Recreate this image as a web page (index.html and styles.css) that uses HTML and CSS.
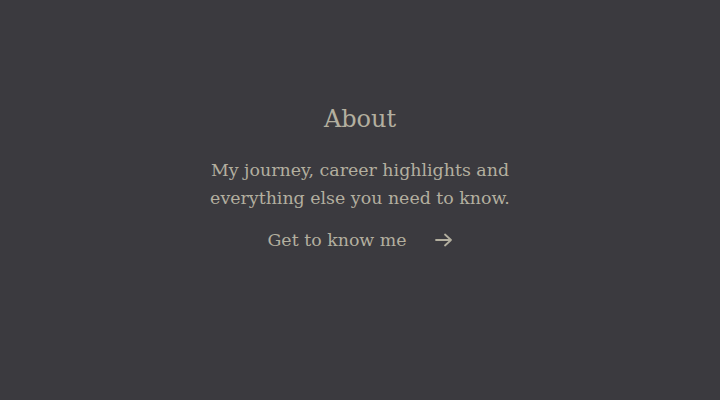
FILE: index.html
```html
<!DOCTYPE html>
<html lang="en">
<head>
<meta charset="utf-8">
<title>About</title>
<link rel="stylesheet" href="styles.css">
</head>
<body>
<main class="page">
  <section class="about">
    <h2 class="about-title">About</h2>
    <p class="about-text">My journey, career highlights and<br>everything else you need to know.</p>
    <a class="about-link" href="#">
      <span>Get to know me</span>
      <svg class="arrow" width="18" height="14" viewBox="0 0 18 14" fill="none" stroke="currentColor" stroke-width="1.8" stroke-linecap="round" stroke-linejoin="round"><path d="M1 7h15M10 1.5 16 7l-6 5.5"/></svg>
    </a>
  </section>
</main>
</body>
</html>
```
FILE: styles.css
```css
html, body {
  margin: 0;
  padding: 0;
  background: #3b3a3f;
}
body {
  font-family: "DejaVu Serif", "Liberation Serif", serif;
  color: #b3af9f;
}
.page {
  width: 720px;
  height: 400px;
  display: flex;
  justify-content: center;
}
.about {
  display: flex;
  flex-direction: column;
  align-items: center;
  padding-top: 103px;
  text-align: center;
}
.about-title {
  margin: 0;
  font-size: 24px;
  font-weight: normal;
  line-height: 32px;
}
.about-text {
  margin: 21px 0 0;
  font-size: 17.4px;
  line-height: 28px;
}
.about-link {
  margin-top: 14px;
  display: flex;
  align-items: center;
  gap: 28px;
  color: inherit;
  text-decoration: none;
  font-size: 17.4px;
  line-height: 28px;
}
.arrow {
  display: block;
}
```
